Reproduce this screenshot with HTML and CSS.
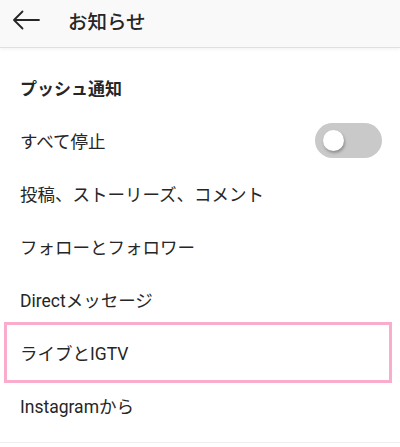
FILE: index.html
```html
<!DOCTYPE html>
<html lang="ja">
<head>
    <meta charset="UTF-8">
    <meta name="viewport" content="width=device-width, initial-scale=1.0">
    <title>お知らせ</title>
    <link rel="stylesheet" href="styles.css">
</head>
<body>
    <header class="topbar">
        <button class="back" aria-label="戻る">
            <svg width="28" height="20" viewBox="0 0 28 20">
                <path d="M27 10H2M10.5 1.5L2 10l8.5 8.5" fill="none" stroke="#262626" stroke-width="1.8" stroke-linecap="round" stroke-linejoin="round"/>
            </svg>
        </button>
        <h1 class="title">お知らせ</h1>
    </header>

    <main class="settings">
        <h2 class="section-title">プッシュ通知</h2>
        <ul class="list">
            <li class="row">
                <span>すべて停止</span>
                <span class="switch"><span class="knob"></span></span>
            </li>
            <li class="row">投稿、ストーリーズ、コメント</li>
            <li class="row">フォローとフォロワー</li>
            <li class="row">Directメッセージ</li>
            <li class="row marked">ライブとIGTV</li>
            <li class="row">Instagramから</li>
        </ul>
    </main>
</body>
</html>
```

FILE: styles.css
```css
body {
    margin: 0;
    font-family: Roboto, "Noto Sans CJK JP", sans-serif;
    color: #262626;
    background: #fff;
}

.topbar {
    height: 47px;
    display: flex;
    align-items: center;
    background: #f9f9f9;
    border-bottom: 1px solid #e0e0e0;
    box-shadow: 0 2px 3px rgba(0, 0, 0, 0.04);
}

.back {
    border: 0;
    background: none;
    padding: 0;
    margin: 0 0 0 12px;
    width: 28px;
    height: 20px;
    margin-top: -7px;
}

.title {
    margin: 0 0 0 28px;
    margin-top: -7px;
    font-size: 19.5px;
    font-weight: 500;
}

.settings {
    padding-top: 13px;
    padding-bottom: 10px;
    border-bottom: 1px solid #eeeeee;
}

.section-title {
    margin: 0;
    height: 53px;
    display: flex;
    align-items: center;
    padding-left: 20px;
    font-size: 17px;
    font-weight: 700;
}

.list {
    list-style: none;
    margin: 0;
    padding: 0;
}

.row {
    position: relative;
    height: 53px;
    display: flex;
    align-items: center;
    justify-content: space-between;
    padding: 0 18px 0 20px;
    font-size: 17.5px;
}

/* 枠で囲んだ項目 */
.row.marked::after {
    content: "";
    position: absolute;
    top: -4px;
    bottom: -4px;
    left: 4px;
    right: 8px;
    border: 3px solid #f9accb;
}

.switch {
    width: 67px;
    height: 35px;
    border-radius: 18px;
    background: #c9c9c9;
    display: flex;
    align-items: center;
    padding-left: 8px;
    box-sizing: border-box;
}

.knob {
    width: 21px;
    height: 21px;
    border-radius: 50%;
    background: #fff;
    box-shadow: 1px 2px 3px rgba(0, 0, 0, 0.3);
}
```
